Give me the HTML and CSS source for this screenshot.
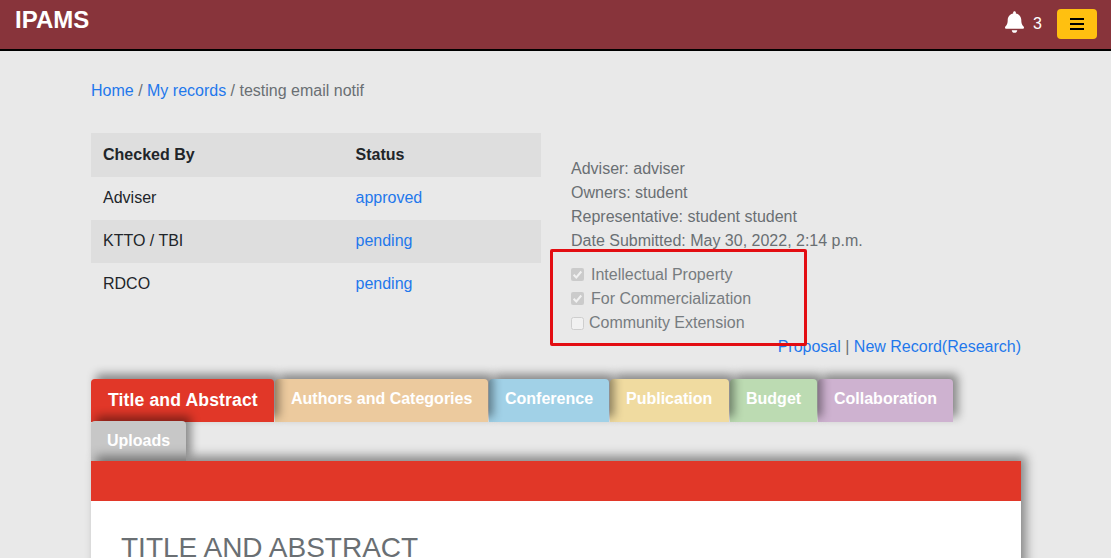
FILE: index.html
```html
<!DOCTYPE html>
<html lang="en">
<head>
<meta charset="utf-8">
<title>IPAMS</title>
<link rel="stylesheet" href="styles.css">
</head>
<body>
<header class="navbar">
  <a class="brand">IPAMS</a>
  <div class="nav-actions">
    <svg class="bell" viewBox="0 0 448 512"><path d="M224 512c35.32 0 63.97-28.65 63.97-64H160.03c0 35.35 28.65 64 63.97 64zm215.39-149.71c-19.32-20.76-55.47-51.99-55.47-154.29 0-77.7-54.48-139.9-127.94-155.16V32c0-17.67-14.32-32-31.98-32s-31.98 14.33-31.98 32v20.84C118.56 68.1 64.08 130.3 64.08 208c0 102.3-36.15 133.53-55.47 154.29-6 6.45-8.66 14.16-8.61 21.71.11 16.4 12.98 32 32.1 32h383.8c19.12 0 32-15.6 32.1-32 .05-7.55-2.61-15.27-8.61-21.71z"/></svg>
    <span class="count">3</span>
    <button class="menu-button" aria-label="Menu"><svg class="bars" viewBox="0 0 14 12"><path d="M0 0h14v2H0zM0 5h14v2H0zM0 10h14v2H0z"/></svg></button>
  </div>
</header>
<main class="container">
  <nav class="breadcrumbs"><a>Home</a> / <a>My records</a> / testing email notif</nav>
  <section class="summary">
    <div class="status-table">
      <div class="row head"><span>Checked By</span><span>Status</span></div>
      <div class="row"><span>Adviser</span><a>approved</a></div>
      <div class="row shaded"><span>KTTO / TBI</span><a>pending</a></div>
      <div class="row"><span>RDCO</span><a>pending</a></div>
    </div>
    <div class="details">
      <div>Adviser: adviser</div>
      <div>Owners: student</div>
      <div>Representative: student student</div>
      <div>Date Submitted: May 30, 2022, 2:14 p.m.</div>
      <div class="checks">
        <div class="check"><svg class="box" viewBox="0 0 13 13"><rect class="box-on" width="13" height="13" rx="2"/><path class="tick" d="M2.6 6.8l2.7 2.7 5-6"/></svg>Intellectual Property</div>
        <div class="check"><svg class="box" viewBox="0 0 13 13"><rect class="box-on" width="13" height="13" rx="2"/><path class="tick" d="M2.6 6.8l2.7 2.7 5-6"/></svg>For Commercialization</div>
        <div class="check tight"><svg class="box" viewBox="0 0 13 13"><rect class="box-off" x=".5" y=".5" width="12" height="12" rx="2"/></svg>Community Extension</div>
        <div class="highlight"></div>
      </div>
      <div class="links"><a>Proposal</a> | <a>New Record(Research)</a></div>
    </div>
  </section>
  <section class="record">
    <div class="tabs">
      <div class="tab title">Title and Abstract</div>
      <div class="tab authors">Authors and Categories</div>
      <div class="tab conference">Conference</div>
      <div class="tab publication">Publication</div>
      <div class="tab budget">Budget</div>
      <div class="tab collaboration">Collaboration</div>
    </div>
    <div class="tabs second">
      <div class="tab uploads">Uploads</div>
    </div>
    <div class="panel">
      <div class="panel-bar"></div>
      <h3 class="panel-title">TITLE AND ABSTRACT</h3>
    </div>
  </section>
</main>
</body>
</html>
```

FILE: styles.css
```css
* { box-sizing: border-box; }
body {
  margin: 0;
  height: 558px;
  overflow: hidden;
  background: #e9e9e9;
  color: #6a6f73;
  font: 16px/24px "Liberation Sans", Arial, sans-serif;
}
a { color: #1f78ec; }
.navbar {
  display: flex;
  justify-content: space-between;
  height: 51px;
  padding: 0 14px 0 15px;
  background: #88343b;
  border-bottom: 2px solid #000;
}
.brand { color: #fff; font-size: 24px; font-weight: bold; line-height: 39px; }
.nav-actions { display: flex; align-items: center; height: 47px; }
.bell { width: 19px; height: 22px; margin-right: 9px; margin-top: -3px; fill: #fff; }
.count { width: 24px; color: #fff; }
.menu-button {
  display: flex;
  align-items: center;
  justify-content: center;
  width: 40px;
  height: 30px;
  padding: 0;
  border: 0;
  border-radius: 4px;
  background: #ffc010;
}
.bars { width: 14px; height: 12px; }
.container { width: 930px; margin-left: 91px; }
.breadcrumbs { padding-top: 28px; height: 82px; }
.summary { display: flex; height: 246px; }
.status-table { width: 450px; color: #212529; }
.row {
  display: grid;
  grid-template-columns: 252.5px 1fr;
  height: 43px;
  padding: 9px 12px;
}
.row.head { height: 44px; padding-top: 10px; background: #dedede; font-weight: bold; }
.row.shaded { background: #dedede; }
.details { flex: 1; padding: 24px 0 0 30px; }
.checks { position: relative; padding-top: 10px; color: #777c80; }
.check { display: flex; align-items: center; }
.box { width: 13px; height: 13px; margin: 0 7px 2px 0; }
.tight .box { margin: 0 5px 0 0; }
.box-on { fill: #cbcbcb; }
.box-off { fill: #f1f1f1; stroke: #cecece; }
.tick { fill: none; stroke: #f1f1f1; stroke-width: 2; }
.highlight {
  position: absolute;
  left: -21px;
  top: -4px;
  width: 257px;
  height: 97px;
  border: 3px solid #e30d12;
  border-radius: 2px;
}
.links { text-align: right; }
.record { position: relative; }
.tabs { display: flex; gap: 1px; height: 43px; }
.tab {
  position: relative;
  height: 43px;
  padding: 8px 0 0 16px;
  border-radius: 4px 4px 0 0;
  box-shadow: 5px -5px 10px rgba(0, 0, 0, .42);
  color: #fff;
  font-weight: bold;
  white-space: nowrap;
}
.title { z-index: 6; width: 183px; padding: 9px 0 0 17px; background: #e13728; font-size: 17.6px; letter-spacing: .12px; }
.authors { z-index: 5; width: 213px; background: #ecca9e; }
.conference { z-index: 4; width: 120px; background: #a1d1e7; }
.publication { z-index: 3; width: 119px; background: #f0dba0; }
.budget { z-index: 2; width: 87px; background: #bcdbb2; }
.collaboration { z-index: 1; width: 135px; background: #ceb2d0; }
.second { height: 40px; margin-top: -1px; }
.uploads { z-index: 7; width: 95px; height: 40px; background: #c7c7c7; }
.panel {
  position: relative;
  z-index: 8;
  height: 120px;
  background: #fff;
  box-shadow: 5px -5px 10px rgba(0, 0, 0, .42);
}
.panel-bar { height: 40px; background: #e13728; }
.panel-title { margin: 0; padding: 31px 30px 0; font-size: 28px; font-weight: normal; line-height: 32px; }
```
